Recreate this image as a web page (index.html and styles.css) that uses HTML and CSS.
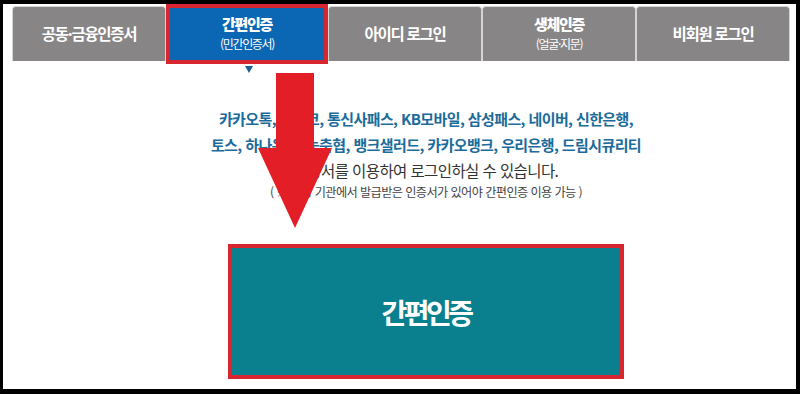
FILE: index.html
```html
<!DOCTYPE html>
<html lang="ko">
<head>
    <meta charset="UTF-8">
    <meta name="viewport" content="width=device-width, initial-scale=1.0">
    <title>간편인증 로그인</title>
    <link rel="stylesheet" href="styles.css">
</head>
<body>
    <div class="frame">
        <ul class="tabs">
            <li class="tab">공동·금융인증서</li>
            <li class="tab tab-on"><strong>간편인증</strong><span>(민간인증서)</span></li>
            <li class="tab">아이디 로그인</li>
            <li class="tab"><strong>생체인증</strong><span>(얼굴·지문)</span></li>
            <li class="tab">비회원 로그인</li>
        </ul>

        <div class="content">
            <p class="providers">카카오톡, 페이코, 통신사패스, KB모바일, 삼성패스, 네이버, 신한은행,<br>토스, 하나은행, 농축협, 뱅크샐러드, 카카오뱅크, 우리은행, 드림시큐리티</p>
            <p class="desc">인증서를 이용하여 로그인하실 수 있습니다.</p>
            <p class="note">( ※ 해당 기관에서 발급받은 인증서가 있어야 간편인증 이용 가능 )</p>
            <button class="login-btn" type="button">간편인증</button>
        </div>

        <!-- 안내용 화살표 -->
        <svg class="arrow" width="74" height="155" viewBox="0 0 74 155">
            <path d="M18 0 H56 V75 H74 L37 155 L0 75 H18 Z" fill="#e41e26"/>
        </svg>
    </div>
</body>
</html>
```

FILE: styles.css
```css
body {
    margin: 0;
    padding: 0;
    background-color: #000; /* 바깥 검은 테두리 */
    font-family: "Noto Sans CJK KR", "Noto Sans", sans-serif;
}
.frame {
    position: relative;
    width: 793px;
    height: 385px;
    margin: 4px 0 0 3px;
    background-color: #fff;
    box-sizing: border-box;
    padding: 2px 6px 0 9px;
}
.tabs {
    list-style: none;
    margin: 0;
    padding: 0;
    display: flex;
    height: 55px;
}
.tab {
    flex: 1;
    display: flex;
    flex-direction: column;
    align-items: center;
    justify-content: center;
    background-color: #878586;
    border: 1px solid #d4d4d4;
    border-bottom: none;
    border-radius: 4px 4px 0 0;
    color: #fff;
    font-size: 15.5px;
    font-weight: bold;
    letter-spacing: -1.3px;
    line-height: 1;
}
.tab strong {
    font-size: 15px;
    margin-top: -3px;
}
.tab span {
    font-size: 12px;
    font-weight: normal;
    letter-spacing: -1.3px;
    margin-top: 7px;
}
.tab-on {
    flex: 0 0 162px;
    position: relative;
    box-sizing: border-box;
    margin: -2px 0 -3px;
    background-color: #0b66b4;
    border: 4px solid #d7262f;
    border-radius: 0;
}
.tab-on::after {
    content: '';
    position: absolute;
    left: 75px;
    bottom: -13px;
    border-left: 4px solid transparent;
    border-right: 4px solid transparent;
    border-top: 7px solid #1b5f94;
}
.content {
    padding-left: 50px;
    text-align: center;
}
.providers {
    margin: 45px 0 0;
    color: #1b6b9b;
    font-size: 15px;
    font-weight: bold;
    line-height: 26px;
    letter-spacing: -0.6px;
}
.desc {
    margin: 0;
    color: #333;
    font-size: 15.5px;
    line-height: 24px;
    letter-spacing: -0.6px;
}
.note {
    margin: 0;
    color: #444;
    font-size: 12.2px;
    line-height: 21px;
    letter-spacing: -0.6px;
}
.login-btn {
    display: block;
    width: 396px;
    height: 135px;
    margin: 41px auto 0;
    background-color: #0a7f8e;
    border: 4px solid #d7262f;
    color: #fff;
    font-family: inherit;
    font-size: 28px;
    font-weight: bold;
    letter-spacing: -3.5px;
}
.arrow {
    position: absolute;
    left: 255px;
    top: 69px;
}
```
